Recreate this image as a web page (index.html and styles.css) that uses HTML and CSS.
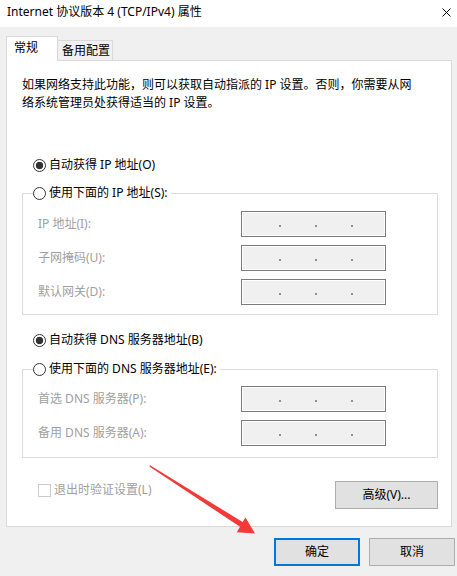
FILE: index.html
```html
<!DOCTYPE html>
<html lang="zh-CN">
<head>
    <meta charset="UTF-8">
    <meta name="viewport" content="width=device-width, initial-scale=1.0">
    <link rel="stylesheet" href="styles.css">
</head>
<body>
    <!-- Title bar -->
    <div class="titlebar">
        <span class="title">Internet 协议版本 4 (TCP/IPv4) 属性</span>
        <svg class="close" width="9" height="9" viewBox="0 0 9 9">
            <path d="M0.5 0.5 L8.5 8.5 M8.5 0.5 L0.5 8.5" stroke="#000" stroke-width="1" fill="none"/>
        </svg>
    </div>

    <!-- Tabs -->
    <div class="tabs">
        <div class="tab active">常规</div>
        <div class="tab">备用配置</div>
    </div>

    <!-- General page -->
    <div class="panel">
        <p class="intro">如果网络支持此功能，则可以获取自动指派的 IP 设置。否则，你需要从网<br>络系统管理员处获得适当的 IP 设置。</p>

        <label class="radio-row first"><span class="radio checked"></span>自动获得 IP 地址(O)</label>
        <fieldset class="group ip-group">
            <legend><span class="radio"></span>使用下面的 IP 地址(S):</legend>
            <div class="field-row">
                <span class="field-label">IP 地址(I):</span>
                <div class="ip-box"><i></i><i></i><i></i></div>
            </div>
            <div class="field-row">
                <span class="field-label">子网掩码(U):</span>
                <div class="ip-box"><i></i><i></i><i></i></div>
            </div>
            <div class="field-row">
                <span class="field-label">默认网关(D):</span>
                <div class="ip-box"><i></i><i></i><i></i></div>
            </div>
        </fieldset>

        <label class="radio-row dns"><span class="radio checked"></span>自动获得 DNS 服务器地址(B)</label>
        <fieldset class="group dns-group">
            <legend><span class="radio"></span>使用下面的 DNS 服务器地址(E):</legend>
            <div class="field-row">
                <span class="field-label">首选 DNS 服务器(P):</span>
                <div class="ip-box"><i></i><i></i><i></i></div>
            </div>
            <div class="field-row">
                <span class="field-label">备用 DNS 服务器(A):</span>
                <div class="ip-box"><i></i><i></i><i></i></div>
            </div>
        </fieldset>

        <div class="panel-foot">
            <label class="check-row"><span class="checkbox"></span>退出时验证设置(L)</label>
            <button class="btn advanced">高级(V)...</button>
        </div>
    </div>

    <!-- Dialog buttons -->
    <div class="dialog-buttons">
        <button class="btn primary">确定</button>
        <button class="btn">取消</button>
    </div>

    <!-- Red annotation arrow -->
    <svg class="arrow" width="457" height="576" viewBox="0 0 457 576">
        <polygon points="150,465.3 242.6,522 245.5,517.5 255,533.6 236.8,532.2 240,526.8 149.4,466.6" fill="#f23a3a"/>
    </svg>
</body>
</html>
```

FILE: styles.css
```css
/* Reset */
* {
    box-sizing: border-box;
}

body {
    margin: 0;
    width: 457px;
    height: 576px;
    overflow: hidden;
    position: relative;
    background-color: #f0f0f0;
    color: #000;
    font-family: "Noto Sans", "Noto Sans CJK SC", sans-serif;
    font-size: 12px;
    line-height: 18px;
}

/* Title bar */
.titlebar {
    height: 27px;
    background-color: #fff;
    display: flex;
    justify-content: space-between;
    align-items: flex-start;
    padding: 3px 6px 0 7px;
}

.close {
    margin-top: 5px;
    display: block;
}

/* Tabs */
.tabs {
    display: flex;
    align-items: flex-end;
    margin-top: 9px;
    padding-left: 6px;
    height: 24px;
}

.tab {
    border: 1px solid #d9d9d9;
    border-bottom: none;
    background-color: #f0f0f0;
}

.tab.active {
    position: relative;
    z-index: 1;
    width: 52px;
    height: 25px;
    margin-bottom: -1px;
    padding: 2px 0 0 7px;
    background-color: #fff;
}

.tab + .tab {
    border-left: none;
    width: 55px;
    height: 20px;
    padding: 1px 0 0 4px;
}

/* Panel */
.panel {
    margin-left: 6px;
    width: 446px;
    height: 467px;
    border: 1px solid #d9d9d9;
    background-color: #fff;
    padding: 15px 13px 0 15px;
}

.intro {
    margin: 0;
}

.radio-row {
    display: flex;
    align-items: center;
    gap: 3px;
    height: 18px;
    margin-left: 11px;
}

.radio-row.first {
    margin-top: 44px;
}

.radio-row.dns {
    margin-top: 16px;
}

.radio {
    width: 13px;
    height: 13px;
    border: 1px solid #333;
    border-radius: 50%;
    background-color: #fff;
    flex-shrink: 0;
}

.radio.checked {
    background: radial-gradient(circle, #333 0, #333 3.4px, #fff 4.1px);
}

/* Group boxes */
.group {
    margin: 10px 0 0;
    min-width: 0;
    border: 1px solid #dcdcdc;
    padding: 9px 0 9px 10px;
}

.dns-group {
    margin-top: 11px;
    padding-top: 8px;
    padding-bottom: 11px;
}

.group legend {
    display: flex;
    align-items: center;
    gap: 3px;
    height: 18px;
    padding: 0 3px 0 0;
}

.field-row {
    display: flex;
    align-items: center;
    height: 26px;
    padding-left: 5px;
}

.field-row + .field-row {
    margin-top: 8px;
}

.field-label {
    width: 203px;
    color: #a0a0a0;
}

.ip-box {
    width: 145px;
    height: 26px;
    border: 1px solid #7a7a7a;
    box-shadow: inset 0 0 0 1px #fff;
    background-color: #f0f0f0;
    display: flex;
    align-items: center;
    gap: 34px;
    padding: 3px 0 0 37px;
}

.ip-box i {
    display: block;
    width: 2px;
    height: 2px;
    background-color: #8d8f98;
}

/* Panel footer */
.panel-foot {
    display: flex;
    justify-content: space-between;
    align-items: flex-start;
    margin-top: 23px;
    padding-left: 16px;
}

.check-row {
    display: flex;
    align-items: center;
    gap: 3px;
    height: 18px;
    color: #a0a0a0;
}

.checkbox {
    width: 13px;
    height: 13px;
    border: 1px solid #cccccc;
    background-color: #fff;
}

/* Buttons */
.btn {
    font: inherit;
    color: #000;
    background-color: #e1e1e1;
    border: 1px solid #adadad;
    height: 28px;
    padding: 0;
}

.advanced {
    width: 103px;
}

.dialog-buttons {
    display: flex;
    justify-content: flex-end;
    gap: 9px;
    margin-top: 11px;
    padding-right: 2px;
}

.dialog-buttons .btn {
    width: 86px;
}

.btn.primary {
    border: 2px solid #0078d7;
}

/* Annotation */
.arrow {
    position: absolute;
    left: 0;
    top: 0;
    pointer-events: none;
}
```
